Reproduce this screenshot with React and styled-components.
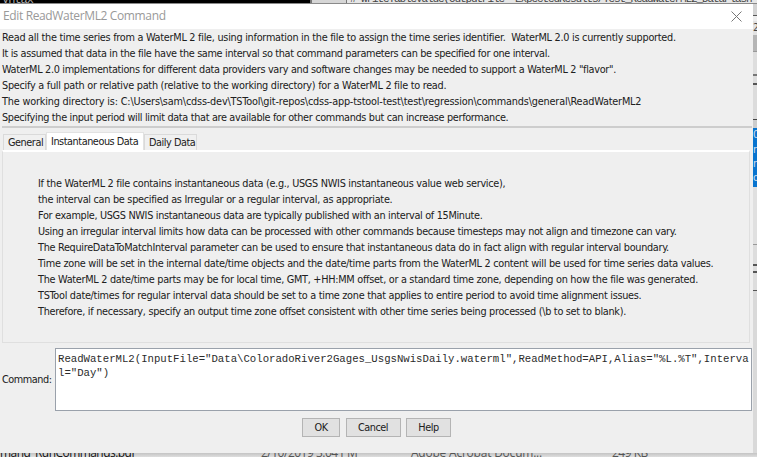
import React from 'react';
import styled, { createGlobalStyle } from 'styled-components';

const Global = createGlobalStyle`
  body { margin: 0; overflow: hidden; background: #d9d9d9; }
  * { box-sizing: border-box; }
`;

const ui = '"DejaVu Sans Condensed", "DejaVu Sans", sans-serif';

const Desktop = styled.div`
  display: grid;
  grid-template: 4px 449px 4px / 753px 4px;
  width: 757px;
  height: 457px;
  overflow: hidden;
`;

const TopStrip = styled.div`
  grid-column: 1 / 3;
  display: flex;
  overflow: hidden;
  border-bottom: 1px solid #8a8a8a;
  background: #d6d6d6;
`;

const Terminal = styled.div`
  width: 310px;
  height: 4px;
  padding-left: 2px;
  overflow: hidden;
  background: #000;
  color: #aaa;
  font: 12px/12px "Liberation Mono", monospace;
  letter-spacing: -1px;
  white-space: pre;
`;

const Gap = styled.div`
  width: 37px;
  border-left: 2px solid #777;
  border-right: 1px solid #777;
`;

const EditorText = styled.div`
  flex: 1;
  height: 4px;
  padding-left: 3px;
  overflow: hidden;
  background: #e6e6e6;
  color: #444;
  font: 11px/11px "Liberation Mono", monospace;
  letter-spacing: -1.1px;
  white-space: pre;
`;

const Raised = styled.span`
  display: block;
  margin-top: ${(p) => p.$by}px;
`;

const Dialog = styled.section`
  display: flex;
  flex-direction: column;
  background: #efefef;
  color: #202020;
  font: 10.8px/16px ${ui};
`;

const TitleBar = styled.header`
  display: flex;
  align-items: center;
  justify-content: space-between;
  flex: none;
  height: 25px;
  padding: 0 11px 1px 3px;
  background: #fff;
  color: #999;
`;

const Title = styled.h1`
  margin: 0;
  font: 12px/24px "Open Sans", sans-serif;
  letter-spacing: -0.36px;
`;

const CloseIcon = styled.svg`
  display: block;
  width: 11px;
  height: 11px;
  stroke: #777;
  stroke-width: 1;
`;

const Notes = styled.div`
  height: 97px;
  padding: 1px 0 0 2px;
`;

const Line = styled.p`
  margin: 0;
  height: 16px;
  white-space: pre;
  letter-spacing: ${(p) => p.$track}px;
`;

const Separator = styled.div`
  flex: none;
  height: 2px;
  margin: 0 1px 0 2px;
  background: #cdcdcd;
`;

const Tabs = styled.nav`
  display: flex;
  align-items: flex-end;
  height: 22px;
  padding-left: 3px;
`;

const Tab = styled.button`
  width: ${(p) => p.$width}px;
  height: ${(p) => (p.$selected ? 18 : 16)}px;
  padding: 0 0 0 4px;
  border: 1px solid ${(p) => (p.$selected ? '#e2e2e2' : '#dadada')};
  border-bottom: 0;
  background: ${(p) => (p.$selected ? '#fff' : '#f0f0f0')};
  color: inherit;
  font: 10.8px/16px ${ui};
  letter-spacing: -0.45px;
  text-align: left;
  white-space: nowrap;
`;

const Panel = styled.main`
  flex: none;
  height: 193px;
  margin: 0 3px 0 2px;
  padding: 24px 0 0 35px;
  border: 1px solid #dfdfdf;
  border-top: 2px solid #fff;
`;

const PanelLine = styled(Line)`
  height: 16.06px;
`;

const CommandRow = styled.div`
  display: flex;
  align-items: center;
  height: 63px;
  margin-top: 5px;
  padding: 0 1px 0 2px;
`;

const Label = styled.label`
  width: 53px;
  letter-spacing: -0.46px;
`;

const Command = styled.div`
  flex: 1;
  height: 63px;
  padding: 3px 0 0 2px;
  border: 1px solid #9aa1ab;
  background: #fff;
  color: #2b2b2b;
  font: 10.66px/14px "Liberation Mono", monospace;
  white-space: pre;
`;

const Buttons = styled.footer`
  display: flex;
  gap: 5.5px;
  margin-top: 7px;
  padding-left: 302px;
`;

const Button = styled.button`
  width: ${(p) => p.$width}px;
  height: 19px;
  padding: 0;
  border: 1px solid #b4b4b4;
  background: #e1e1e1;
  color: inherit;
  font: 10.8px/16px ${ui};
  letter-spacing: -0.46px;
`;

const SideStrip = styled.aside`
  display: flex;
  flex-direction: column;
  overflow: hidden;
  background: #d9d9d9;
`;

const Slice = styled.div`
  flex: none;
  height: ${(p) => p.$h}px;
  overflow: hidden;
  background: ${(p) => p.$color};
  color: ${(p) => p.$ink || '#444'};
  font: 11px/14px ${ui};
`;

const BottomStrip = styled.div`
  grid-column: 1 / 3;
  display: grid;
  grid-template-columns: 261px 150px 201px 1fr;
  overflow: hidden;
  background: linear-gradient(#c4c4c4, #dedede);
  color: #555;
  font: 12px/16px "Open Sans", sans-serif;
  white-space: pre;
`;

const FileCell = styled.span`
  height: 16px;
  margin-top: -8px;
  color: ${(p) => p.$ink};
  letter-spacing: ${(p) => p.$track}px;
`;

const notes = [
  ['Read all the time series from a WaterML 2 file, using information in the file to assign the time series identifier.  WaterML 2.0 is currently supported.', -0.266],
  ['It is assumed that data in the file have the same interval so that command parameters can be specified for one interval.', -0.332],
  ['WaterML 2.0 implementations for different data providers vary and software changes may be needed to support a WaterML 2 "flavor".', -0.31],
  ['Specify a full path or relative path (relative to the working directory) for a WaterML 2 file to read.', -0.269],
  ['The working directory is: C:\\Users\\sam\\cdss-dev\\TSTool\\git-repos\\cdss-app-tstool-test\\test\\regression\\commands\\general\\ReadWaterML2', -0.181],
  ['Specifying the input period will limit data that are available for other commands but can increase performance.', -0.327],
];

const details = [
  ['If the WaterML 2 file contains instantaneous data (e.g., USGS NWIS instantaneous value web service),', -0.286],
  ['the interval can be specified as Irregular or a regular interval, as appropriate.', -0.277],
  ['For example, USGS NWIS instantaneous data are typically published with an interval of 15Minute.', -0.325],
  ['Using an irregular interval limits how data can be processed with other commands because timesteps may not align and timezone can vary.', -0.33],
  ['The RequireDataToMatchInterval parameter can be used to ensure that instantaneous data do in fact align with regular interval boundary.', -0.301],
  ['Time zone will be set in the internal date/time objects and the date/time parts from the WaterML 2 content will be used for time series data values.', -0.282],
  ['The WaterML 2 date/time parts may be for local time, GMT, +HH:MM offset, or a standard time zone, depending on how the file was generated.', -0.286],
  ['TSTool date/times for regular interval data should be set to a time zone that applies to entire period to avoid time alignment issues.', -0.286],
  ['Therefore, if necessary, specify an output time zone offset consistent with other time series being processed (\\b to set to blank).', -0.291],
];

const slices = [
  [11, '#d3d3d3'], [1, '#555'], [5, '#eee'], [14, '#e2e2e2', '2'], [16, '#b5b5b5'], [1, '#999'],
  [22, '#dedede'], [2, '#777'], [7, '#ddd'], [2, '#555'], [34, '#dcdcdc'], [1, '#444'],
  [8, '#ccc'],
  [15, '#0874cf', '0', '#cde'], [14, '#0874cf', 'r', '#cde'], [14, '#0874cf', 'r', '#cde'], [16, '#0874cf', 'o', '#cde'],
  [57, '#e0e0e0'], [1, '#999'], [19, '#ddd'], [2, '#555'], [5, '#ddd'], [2, '#555'], [17, '#ddd'], [1, '#555'],
];

export default function App() {
  return (
    <>
      <Global />
      <Desktop>
        <TopStrip>
          <Terminal><Raised $by={-6}>yntax</Raised></Terminal>
          <Gap />
          <EditorText><Raised $by={-6}># WriteTableValue(OutputFile="ExpectedResults/Test_ReadWaterML2_DataFlash"</Raised></EditorText>
        </TopStrip>
        <Dialog>
          <TitleBar>
            <Title>Edit ReadWaterML2 Command</Title>
            <CloseIcon viewBox="0 0 11 11"><path d="M.5 .5l10 10M10.5 .5l-10 10" /></CloseIcon>
          </TitleBar>
          <Notes>
            {notes.map(([text, track]) => <Line key={text} $track={track}>{text}</Line>)}
          </Notes>
          <Separator />
          <Tabs>
            <Tab $width={43}>General</Tab>
            <Tab $width={98} $selected>Instantaneous Data</Tab>
            <Tab $width={53}>Daily Data</Tab>
          </Tabs>
          <Panel>
            {details.map(([text, track]) => <PanelLine key={text} $track={track}>{text}</PanelLine>)}
          </Panel>
          <CommandRow>
            <Label>Command:</Label>
            <Command>
              {'ReadWaterML2(InputFile="Data\\ColoradoRiver2Gages_UsgsNwisDaily.waterml",ReadMethod=API,Alias="%L.%T",Interva\nl="Day")'}
            </Command>
          </CommandRow>
          <Buttons>
            <Button $width={38}>OK</Button>
            <Button $width={55}>Cancel</Button>
            <Button $width={45}>Help</Button>
          </Buttons>
        </Dialog>
        <SideStrip>
          {slices.map(([h, color, text, ink], i) => <Slice key={i} $h={h} $color={color} $ink={ink}>{text}</Slice>)}
        </SideStrip>
        <BottomStrip>
          <FileCell $ink="#111" $track={-0.55}>mand_RunCommands.pdf</FileCell>
          <FileCell $track={-0.5}>2/10/2019 3:04 PM</FileCell>
          <FileCell $track={-0.22}>Adobe Acrobat Docum...</FileCell>
          <FileCell $track={-0.5}>249 KB</FileCell>
        </BottomStrip>
      </Desktop>
    </>
  );
}
